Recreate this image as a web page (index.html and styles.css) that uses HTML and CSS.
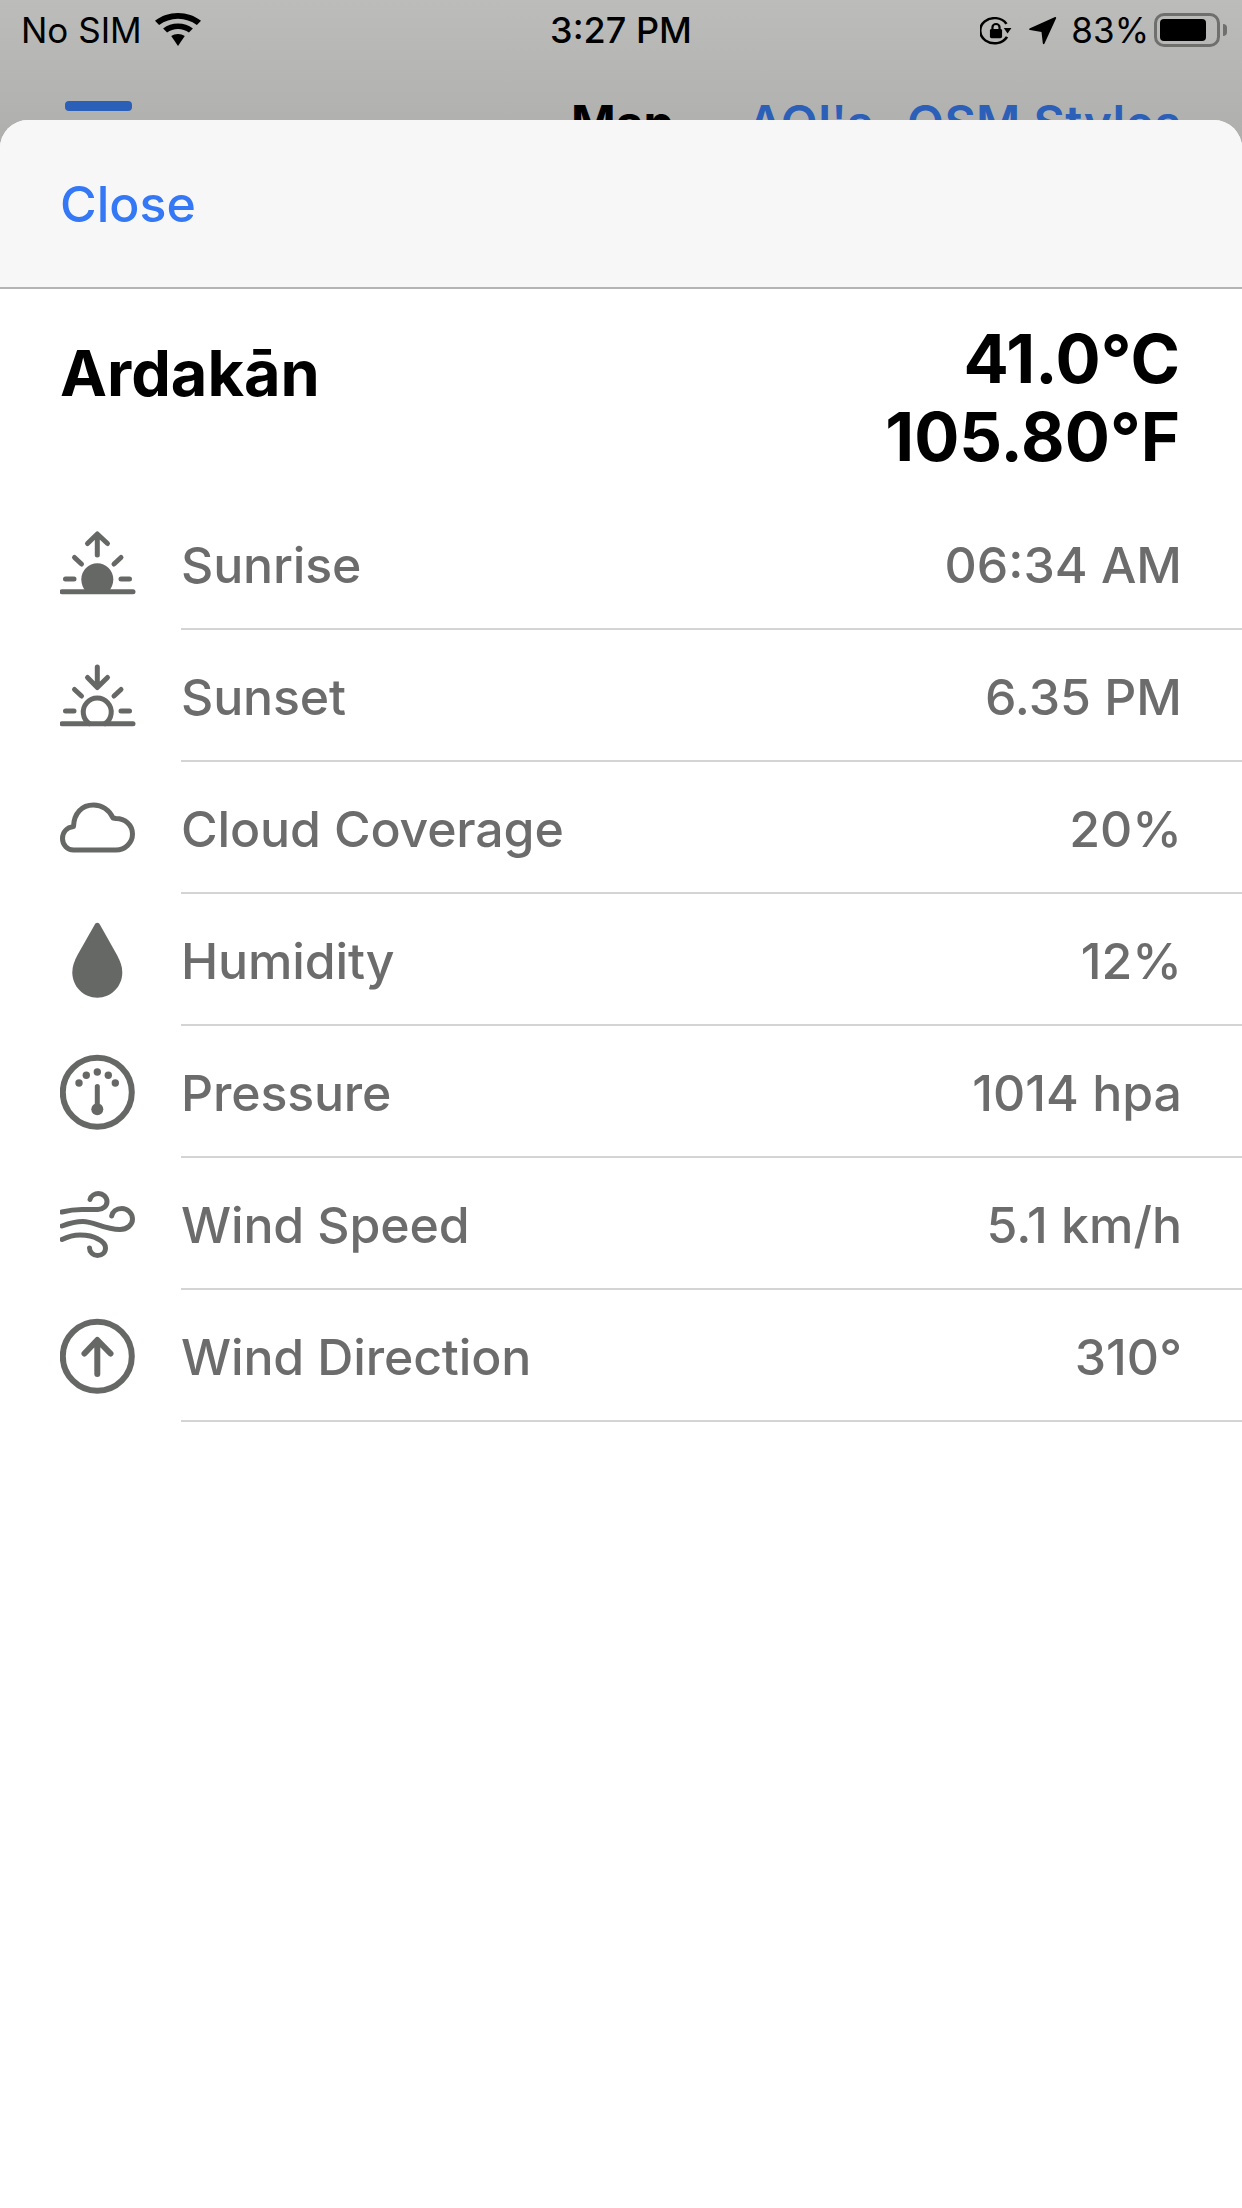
FILE: index.html
```html
<!DOCTYPE html>
<html lang="en">
<head>
<meta charset="utf-8">
<title>Ardakān weather</title>
<link rel="stylesheet" href="styles.css">
</head>
<body>
<div class="screen">
  <div class="backdrop">
    <div class="status">
      <div class="status-left">
        <span>No SIM</span>
        <svg class="wifi" width="46" height="33" viewBox="0 0 38 33" preserveAspectRatio="none"><path d="M19 0C11.700 0 5.500 2.800 0 7.700L3.400 12C8 8.100 13.200 5.800 19 5.800S30 8.100 34.600 12L38 7.700C32.500 2.800 26.300 0 19 0Z"/><path d="M19 10.500C14.300 10.500 10.200 12.300 6.700 15.400L10 19.500C12.600 17.200 15.600 16 19 16S25.400 17.200 28 19.500L31.300 15.400C27.800 12.300 23.700 10.500 19 10.500Z"/><path d="M19 21C16.900 21 15 21.800 13.400 23.100L19 33L24.600 23.100C23 21.800 21.100 21 19 21Z"/></svg>
      </div>
      <span class="status-time">3:27 PM</span>
      <div class="status-right">
        <svg class="lock" width="32" height="29" viewBox="0 0 29 30" preserveAspectRatio="none"><path d="M24.500 20.500A13 13 0 1 1 24 7" fill="none" stroke="#000" stroke-width="2.400"/><path d="M21.500 11.500H28.500L25 17Z"/><rect x="9" y="12.500" width="11" height="9.500" rx="1.500"/><path d="M11.300 13V10.500A3.200 3.200 0 0 1 17.700 10.500V13" fill="none" stroke="#000" stroke-width="2"/></svg>
        <svg class="arrow" width="28" height="28" viewBox="0 0 28 28"><path d="M27 1.500L15.500 26.500C15 27.700 14 27.500 13.800 26.300L12.500 15L1 13C-.2 12.800-.2 11.800 1 11.300L25.500 .2C26.800-.3 27.600 .3 27 1.500Z"/></svg>
        <span class="battery-pct">83%</span>
        <div class="battery"><div class="battery-fill"></div></div>
        <div class="battery-nub"></div>
      </div>
    </div>
    <div class="nav">
      <div class="menu-bar"></div>
      <span class="nav-title">Map</span>
      <span class="nav-link nav-aqi">AQI's</span>
      <span class="nav-link nav-osm">OSM Styles</span>
    </div>
  </div>

  <div class="sheet">
    <div class="sheet-head"><span class="close">Close</span></div>
    <div class="summary">
      <div class="city">Ardakān</div>
      <div class="temps"><div>41.0°C</div><div>105.80°F</div></div>
    </div>

    <div class="row">
      <svg class="icon" viewBox="0 0 76 76"><g class="st"><path d="M2 65.700H73"/><path d="M5.500 53H14M61 53H69.500M14.500 31.500L21.500 38M54 38L61 31.500"/><path d="M37.300 29V9M27.500 17.500L37.300 8L47.500 17.500"/></g><path class="fl" d="M26 65.700C23 62.500 21.300 58 21.300 53.300A16 16 0 0 1 53.300 53.300C53.300 58 51.500 62.500 48.500 65.700Z"/></svg>
      <div class="row-body"><span class="label">Sunrise</span><span class="value">06:34 AM</span></div>
    </div>
    <div class="row">
      <svg class="icon" viewBox="0 0 76 76"><g class="st"><path d="M2 65.700H73"/><path d="M5.500 53H14M61 53H69.500M14.500 31.500L21.500 38M54 38L61 31.500"/><path d="M37.300 29V9M27.500 19.500L37.300 29.500L47.500 19.500"/><path d="M29.500 65.700A14 14 0 1 1 45 65.700"/></g></svg>
      <div class="row-body"><span class="label">Sunset</span><span class="value">6.35 PM</span></div>
    </div>
    <div class="row">
      <svg class="icon" viewBox="0 0 76 76"><path class="st" d="M13.500 60H56C65 60 72.500 53 72.500 44C72.500 35 65 28.500 56 28.500L53 28C49.500 20 42 15 33.500 15C22 15 14 23 13.500 36.500C7 37.500 2.500 42 2.500 48.500C2.500 55 7.500 60 13.500 60Z"/></svg>
      <div class="row-body"><span class="label">Cloud Coverage</span><span class="value">20%</span></div>
    </div>
    <div class="row">
      <svg class="icon" viewBox="0 0 76 76"><path class="fl" d="M37.300.7C38.700.7 39.300 1.500 40.100 2.900L57 33C60 38.500 62.300 44 62.300 50.500C62.300 64.500 51 75.700 37.300 75.700C23.500 75.700 12.300 64.500 12.300 50.500C12.300 44 14.500 38.500 17.500 33L34.500 2.900C35.300 1.500 36 .7 37.300 .7Z"/></svg>
      <div class="row-body"><span class="label">Humidity</span><span class="value">12%</span></div>
    </div>
    <div class="row">
      <svg class="icon" viewBox="0 0 76 76"><circle class="st thick" cx="37.300" cy="38.300" r="34.500"/><g class="fl"><circle cx="19" cy="29" r="3.700"/><circle cx="26.300" cy="21.300" r="3.700"/><circle cx="37.300" cy="18" r="3.700"/><circle cx="48.300" cy="21.300" r="3.700"/><circle cx="55.300" cy="29" r="3.700"/><circle cx="37.300" cy="55.300" r="6"/></g><path class="st" d="M37.300 32.500V55"/></svg>
      <div class="row-body"><span class="label">Pressure</span><span class="value">1014 hpa</span></div>
    </div>
    <div class="row">
      <svg class="icon" viewBox="0 0 76 76"><g class="st"><path d="M30 13.500C31 9.500 35 7.500 38.500 7.500C43 7.500 47 11 47 15.500C47 20 43 23.500 38 23.500L22 23.500C14 23.500 8 24.500 2 26"/><path d="M2 40C10 37 16 35.500 23 35.500C34 35.500 44 43.500 60 43.500C67 43.500 72.500 39 72.500 33C72.500 27 67 22.500 62 22.500C56 22.500 52.500 26 51.700 30"/><path d="M2 53.500C8 50.500 14 49 20 49C26 49 33 50 38 53C43 55.500 45.500 58.500 45.500 62C45.500 66.500 42 69.500 37.500 69.500C33 69.500 29.500 66 29.500 62"/></g></svg>
      <div class="row-body"><span class="label">Wind Speed</span><span class="value">5.1 km/h</span></div>
    </div>
    <div class="row">
      <svg class="icon" viewBox="0 0 76 76"><g class="st thick"><circle cx="37.300" cy="38.300" r="34.500"/><path d="M37.300 56V22.500M24.500 35.500L37.300 22L50.500 35.500"/></g></svg>
      <div class="row-body"><span class="label">Wind Direction</span><span class="value">310°</span></div>
    </div>
  </div>
</div>
</body>
</html>
```

FILE: styles.css
```css
* { box-sizing: border-box; }
html, body { margin: 0; padding: 0; }
body {
  width: 1242px;
  height: 2208px;
  overflow: hidden;
  background: #fff;
  font-family: Inter, "Liberation Sans", sans-serif;
}
.screen {
  height: 2208px;
  background: linear-gradient(#bcbdba 0, #aeafac 150px) no-repeat;
  background-size: 100% 160px;
}
.backdrop { height: 120px; overflow: hidden; }

.status {
  height: 60px;
  padding: 13px 15px 0 21px;
  display: grid;
  grid-template-columns: 1fr auto 1fr;
  color: #000;
  font-size: 35px;
  line-height: 34px;
}
.status-left { display: flex; gap: 13px; align-items: flex-start; }
.status-time { font-size: 36px; font-weight: 500; margin-left: -6px; }
.status-right { display: flex; justify-content: flex-end; align-items: flex-start; }
.wifi { display: block; }
.lock { margin-top: 4px; margin-right: 17px; }
.arrow { margin-top: 4px; margin-right: 14px; }
.battery-pct { margin-right: 5px; }
.battery {
  width: 66px;
  height: 34px;
  border: 3px solid #6f706e;
  border-radius: 10px;
  padding: 3px;
}
.battery-fill { width: 46px; height: 22px; background: #000; border-radius: 4px; }
.battery-nub {
  width: 4px;
  height: 12px;
  margin: 11px 0 0 3px;
  background: #6f706e;
  border-radius: 0 4px 4px 0;
}

.nav {
  position: relative;
  height: 60px;
  display: flex;
  align-items: flex-start;
  padding: 41px 0 0 65px;
  font-size: 48px;
  line-height: 56px;
  white-space: nowrap;
}
.menu-bar { width: 67px; height: 10px; background: #2b5fb8; border-radius: 4px; }
.nav-title { margin-left: 439px; margin-top: -6px; font-weight: 700; color: #000; }
.nav-link { margin-top: -6px; color: #2b5fb8; font-weight: 600; }
.nav-aqi { margin-left: 74px; margin-right: 34px; }
.nav-osm { letter-spacing: .5px; }

.sheet {
  height: 2088px;
  background: #fff;
  border-radius: 28px 28px 0 0;
  overflow: hidden;
}
.sheet-head {
  height: 169px;
  background: #f7f7f7;
  border-bottom: 2px solid #b4b4b4;
  padding: 54px 0 0 60px;
}
.close { font-size: 50px; line-height: 60px; color: #3478f6; font-weight: 550; }

.summary {
  height: 209px;
  padding: 31px 62px 0 60px;
  display: flex;
  justify-content: space-between;
  align-items: flex-start;
  color: #000;
  font-weight: 700;
  line-height: 78px;
}
.city { margin-top: 14px; font-size: 63px; }
.temps { text-align: right; font-size: 67px; }

.row { height: 132px; display: flex; align-items: center; padding-left: 60px; }
.icon { width: 76px; height: 76px; flex: none; display: block; }
.st { fill: none; stroke: #666866; stroke-width: 5; stroke-linecap: round; stroke-linejoin: round; }
.thick { stroke-width: 6; }
.fl { fill: #666866; }
.row-body {
  margin-left: 45px;
  flex: 1;
  align-self: stretch;
  display: flex;
  justify-content: space-between;
  align-items: center;
  padding: 3px 60px 0 0;
  border-bottom: 2px solid #d4d4d4;
  color: #6c6c6c;
  font-size: 50px;
  font-weight: 550;
}
.label { letter-spacing: -.15px; }
```
